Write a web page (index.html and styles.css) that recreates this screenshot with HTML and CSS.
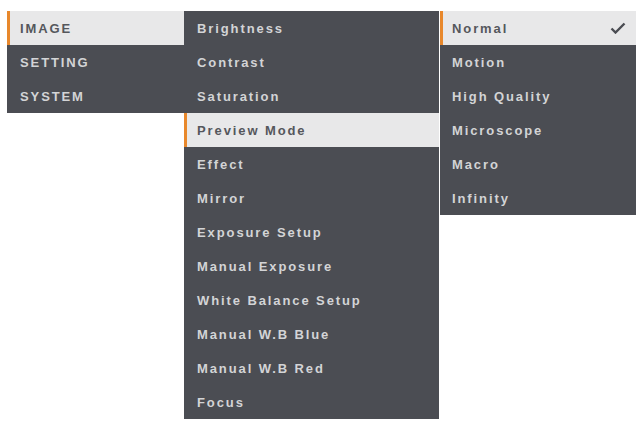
FILE: index.html
```html
<!DOCTYPE html>
<html lang="en">
<head>
  <meta charset="UTF-8">
  <meta name="viewport" content="width=device-width, initial-scale=1.0">
  <title>Image Menu</title>
  <link rel="stylesheet" href="styles.css">
</head>
<body>
  <div class="menu-bar">
    <!-- Top level menu -->
    <ul class="menu menu-main">
      <li class="menu-item active">IMAGE</li>
      <li class="menu-item">SETTING</li>
      <li class="menu-item">SYSTEM</li>
    </ul>

    <!-- Image sub menu -->
    <ul class="menu menu-sub">
      <li class="menu-item">Brightness</li>
      <li class="menu-item">Contrast</li>
      <li class="menu-item">Saturation</li>
      <li class="menu-item active">Preview Mode</li>
      <li class="menu-item">Effect</li>
      <li class="menu-item">Mirror</li>
      <li class="menu-item">Exposure Setup</li>
      <li class="menu-item">Manual Exposure</li>
      <li class="menu-item">White Balance Setup</li>
      <li class="menu-item">Manual W.B Blue</li>
      <li class="menu-item">Manual W.B Red</li>
      <li class="menu-item">Focus</li>
    </ul>

    <!-- Preview mode options -->
    <ul class="menu menu-options">
      <li class="menu-item active">Normal
        <svg class="check" width="16" height="12" viewBox="0 0 16 12">
          <path d="M1.5 6.5 L5.5 10.5 L14.5 1.5" fill="none" stroke="#4a4c52" stroke-width="2.4"/>
        </svg>
      </li>
      <li class="menu-item">Motion</li>
      <li class="menu-item">High Quality</li>
      <li class="menu-item">Microscope</li>
      <li class="menu-item">Macro</li>
      <li class="menu-item">Infinity</li>
    </ul>
  </div>
</body>
</html>
```

FILE: styles.css
```css
body {
  margin: 0;
  background-color: #ffffff;
  font-family: "Liberation Sans", Arial, sans-serif;
}

.menu-bar {
  display: flex;
  align-items: flex-start;
  padding: 11px 0 0 7px;
}

.menu {
  list-style: none;
  margin: 0;
  padding: 0;
  background-color: #4b4d53;
}

.menu-main {
  width: 177px;
}

.menu-sub {
  width: 255px;
}

.menu-options {
  width: 196px;
  margin-left: 1px;
}

.menu-item {
  display: flex;
  align-items: center;
  justify-content: space-between;
  height: 34px;
  padding: 0 10px 0 10px;
  border-left: 3px solid transparent;
  color: #d3d4d6;
  font-size: 13px;
  font-weight: bold;
  letter-spacing: 1.9px;
}

.menu-options .menu-item {
  padding-left: 9px;
}

.menu-item.active {
  background-color: #e8e8e9;
  border-left-color: #e8882c;
  color: #55575c;
}

.check {
  display: block;
}
```
